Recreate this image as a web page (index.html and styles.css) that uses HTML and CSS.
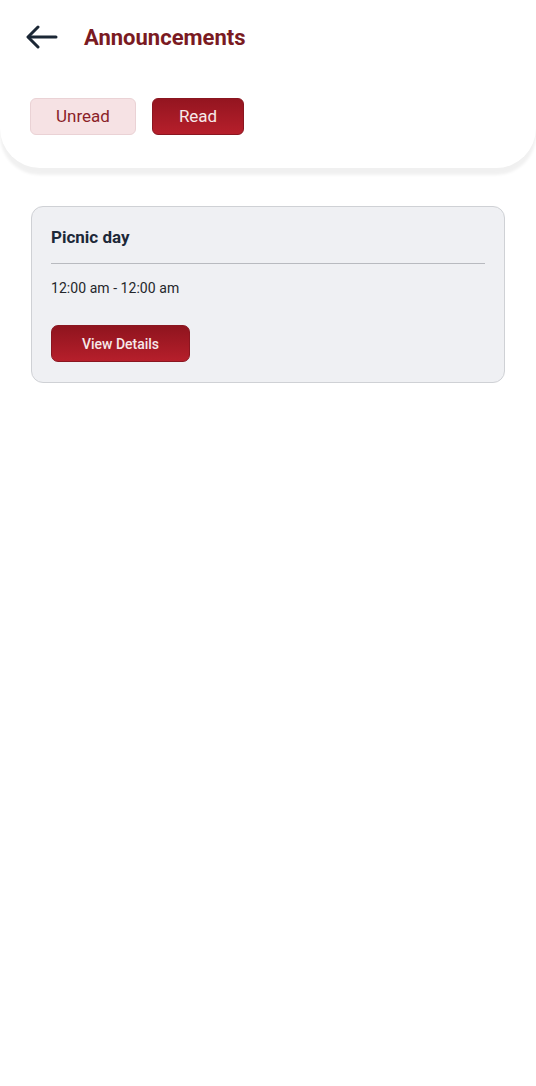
FILE: index.html
```html
<!DOCTYPE html>
<html lang="en">
<head>
  <meta charset="UTF-8">
  <meta name="viewport" content="width=device-width, initial-scale=1.0">
  <title>Announcements</title>
  <link rel="stylesheet" href="styles.css">
</head>
<body>
  <header class="top">
    <div class="top-bar">
      <button type="button" class="back" aria-label="Back">
        <svg width="32" height="24" viewBox="0 0 32 24" fill="none" stroke="#1b2735" stroke-width="3" stroke-linecap="round" stroke-linejoin="round">
          <path d="M30 12H3"/>
          <path d="M12 2L2 12l10 10"/>
        </svg>
      </button>
      <h1 class="title">Announcements</h1>
    </div>
    <div class="tabs">
      <button type="button" class="tab">Unread</button>
      <button type="button" class="tab tab-active">Read</button>
    </div>
  </header>

  <main class="list">
    <div class="card">
      <h2 class="card-title">Picnic day</h2>
      <hr class="divider">
      <p class="card-time">12:00 am - 12:00 am</p>
      <button type="button" class="details">View Details</button>
    </div>
  </main>
</body>
</html>
```

FILE: styles.css
```css
body {
  margin: 0;
  background-color: #ffffff;
  font-family: Roboto, "Noto Sans", sans-serif;
}
.top {
  background-color: #ffffff;
  border-radius: 0 0 40px 40px;
  box-shadow: 0 7px 3px rgba(0, 0, 0, 0.06);
  padding-bottom: 33px;
}
.top-bar {
  display: flex;
  align-items: center;
  height: 74px;
  padding-left: 26px;
}
.back {
  background: none;
  border: none;
  padding: 0;
  width: 32px;
  height: 24px;
  margin-right: 26px;
  cursor: pointer;
}
.back svg {
  display: block;
}
.title {
  margin: 0;
  font-size: 22px;
  font-weight: 700;
  color: #7a1a22;
}
.tabs {
  display: flex;
  gap: 16px;
  margin-top: 24px;
  padding-left: 30px;
}
.tab {
  height: 37px;
  padding: 0 25px 1px 25px;
  font-family: Roboto, sans-serif;
  font-size: 17px;
  color: #8b1f29;
  background-color: #f6e2e4;
  border: 1px solid #ead2d5;
  border-radius: 6px;
}
.tab-active {
  padding: 0 26px 1px 26px;
  color: #f7e9ea;
  background: linear-gradient(#941520, #b61f2b);
  border-color: #8a1620;
}
.list {
  padding: 38px 31px 0 31px;
}
.card {
  background-color: #eff0f3;
  border: 1px solid #cfd1d5;
  border-radius: 12px;
  padding: 19px 19px 20px 19px;
}
.card-title {
  margin: 0;
  font-size: 17px;
  line-height: 22px;
  font-weight: 700;
  color: #1c2838;
}
.divider {
  margin: 15px 0;
  border: none;
  border-top: 1.5px solid #b8babf;
}
.card-time {
  margin: 0;
  font-size: 14px;
  line-height: 18px;
  letter-spacing: 0.05px;
  color: #25272b;
}
.details {
  margin-top: 28px;
  width: 139px;
  height: 37px;
  padding-bottom: 1px;
  font-family: Roboto, sans-serif;
  font-size: 14px;
  font-weight: 500;
  color: #f6e8e9;
  background: linear-gradient(#8f141e, #b61f2b);
  border: 1px solid #8a1620;
  border-radius: 7px;
}
```
